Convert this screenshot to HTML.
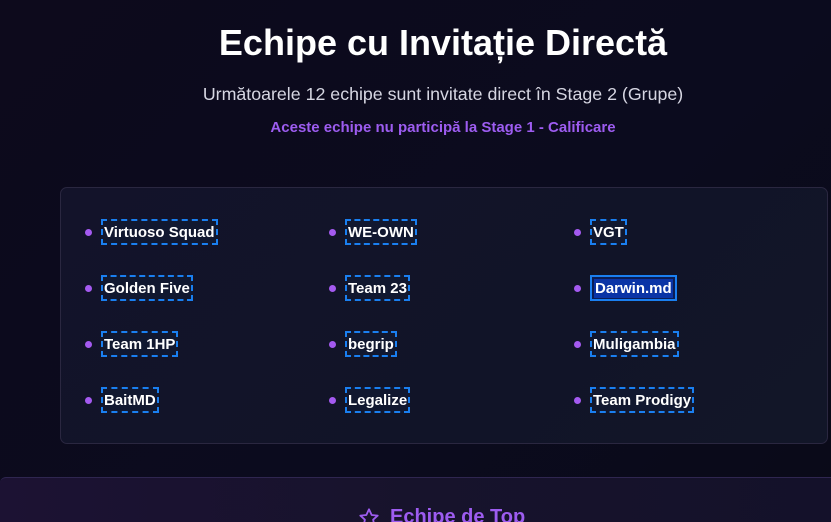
<!DOCTYPE html>
<html><head><meta charset="utf-8"><style>
*{margin:0;padding:0;box-sizing:border-box}
html,body{width:831px;height:522px;overflow:hidden}
body{background:linear-gradient(135deg,#0d0a1c 0%,#0b0b1e 60%,#0a0a18 100%);font-family:"Liberation Sans",sans-serif;position:relative}
h1{position:absolute;left:0;width:886px;text-align:center;top:22px;font-size:36px;color:#fff;font-weight:bold;letter-spacing:0px}
.sub{position:absolute;left:0;width:886px;text-align:center;top:84px;font-size:17.8px;color:#d6d6e2}
.note{position:absolute;left:0;width:886px;text-align:center;top:119px;font-size:15px;color:#9d5cf0;font-weight:bold}
.card{position:absolute;left:60px;top:187px;width:768px;height:257px;border:1px solid #2a2740;border-radius:7px;background:linear-gradient(135deg,#13132a,#111428 60%,#121628)}
.it{position:absolute;height:26px;display:flex;align-items:center}
.dot{width:7px;height:7px;border-radius:50%;background:#a45af0;margin-right:9px}
.t{color:#fff;font-weight:bold;font-size:15px;border:2px dashed #1a7ff0;padding:3px 1px 1px;line-height:18px;background:#111830}
.sel{border:2px solid #1a7ff0;padding:3px 2px 1px;background:#0b1d55}
.sel span{background:#0a34a6;padding:1px 1px}
.bot{position:absolute;left:0;top:477px;width:840px;height:60px;border-top:1px solid #2f2650;border-radius:6px 0 0 0;background:linear-gradient(90deg,#1c1233,#17132c 50%,#14112a)}
.bt{position:absolute;left:358px;top:506px;color:#9d5cf0;font-weight:bold;font-size:20px;display:flex;align-items:center;gap:10px}
</style></head><body>
<h1>Echipe cu Invitație Directă</h1>
<div class="sub">Următoarele 12 echipe sunt invitate direct în Stage 2 (Grupe)</div>
<div class="note">Aceste echipe nu participă la Stage 1 - Calificare</div>
<div class="card"></div>
<div class="it" style="left:85px;top:219px"><div class="dot"></div><div class="t">Virtuoso Squad</div></div>
<div class="it" style="left:329px;top:219px"><div class="dot"></div><div class="t">WE-OWN</div></div>
<div class="it" style="left:574px;top:219px"><div class="dot"></div><div class="t">VGT</div></div>
<div class="it" style="left:85px;top:275px"><div class="dot"></div><div class="t">Golden Five</div></div>
<div class="it" style="left:329px;top:275px"><div class="dot"></div><div class="t">Team 23</div></div>
<div class="it" style="left:574px;top:275px"><div class="dot"></div><div class="t sel"><span>Darwin.md</span></div></div>
<div class="it" style="left:85px;top:331px"><div class="dot"></div><div class="t">Team 1HP</div></div>
<div class="it" style="left:329px;top:331px"><div class="dot"></div><div class="t">begrip</div></div>
<div class="it" style="left:574px;top:331px"><div class="dot"></div><div class="t">Muligambia</div></div>
<div class="it" style="left:85px;top:387px"><div class="dot"></div><div class="t">BaitMD</div></div>
<div class="it" style="left:329px;top:387px"><div class="dot"></div><div class="t">Legalize</div></div>
<div class="it" style="left:574px;top:387px"><div class="dot"></div><div class="t">Team Prodigy</div></div>
<div class="bot"></div>
<div class="bt"><svg width="22" height="22" viewBox="0 0 24 24"><path d="M12 2.5l2.9 6.2 6.6.7-5 4.5 1.4 6.6L12 17.2l-5.9 3.3 1.4-6.6-5-4.5 6.6-.7z" fill="none" stroke="#9d5cf0" stroke-width="2" stroke-linejoin="round"/></svg><span>Echipe de Top</span></div>
</body></html>
